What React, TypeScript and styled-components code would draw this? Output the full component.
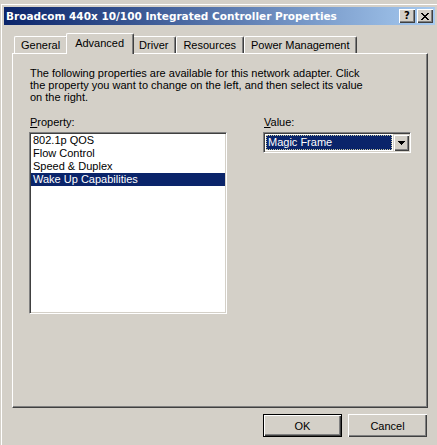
import React from "react";
import styled, { createGlobalStyle } from "styled-components";

const GlobalStyle = createGlobalStyle`
  html, body { margin: 0; padding: 0; background: #d4d0c8; overflow: hidden; }
  * { box-sizing: border-box; }
  #root { width: 437px; height: 445px; }
`;

const face = "#d4d0c8";
const shadow = "#808080";
const dark = "#404040";
const uiFont = `"Liberation Sans", Arial, sans-serif`;

const Page = styled.div`
  width: 437px;
  height: 445px;
  padding-top: 3px;
  background: ${face};
  font-family: ${uiFont};
  font-size: 11px;
  color: #000;
`;

const Window = styled.div`
  height: 442px;
  padding: 4px 2px 0 4px;
  background: ${face};
  box-shadow: inset 1px 1px 0 ${face}, inset 2px 2px 0 #fff;
`;

const TitleBar = styled.div`
  height: 18px;
  display: flex;
  align-items: center;
  padding: 0 2px 0 2px;
  background: linear-gradient(to right, #0a246a, #a6caf0);
`;

const TitleText = styled.div`
  flex: 1;
  color: #fff;
  font-family: "DejaVu Sans", Verdana, sans-serif;
  font-weight: bold;
  font-size: 10.5px;
  white-space: nowrap;
  line-height: 18px;
`;

const CaptionButton = styled.div`
  width: 16px;
  height: 14px;
  margin-left: 2px;
  background: ${face};
  box-shadow: inset 1px 1px 0 #fff, inset -1px -1px 0 ${dark}, inset -2px -2px 0 ${shadow};
  display: flex;
  align-items: center;
  justify-content: center;
  font-family: "DejaVu Sans", Verdana, sans-serif;
  font-weight: bold;
  font-size: 10px;
  line-height: 14px;
  color: #000;
`;

const Client = styled.div`
  padding-top: 8px;
`;

const TabStrip = styled.div`
  display: flex;
  align-items: flex-end;
  height: 21px;
  padding-left: 10px;
`;

const Tab = styled.div<{ $active?: boolean }>`
  position: relative;
  z-index: ${(p) => (p.$active ? 2 : 0)};
  height: ${(p) => (p.$active ? "21px" : "18px")};
  margin: ${(p) => (p.$active ? "0 -2px" : "0")};
  padding: ${(p) => (p.$active ? "0 9px 3px 8px" : "0 7px 1px 6px")};
  display: flex;
  align-items: center;
  background: ${face};
  border-top: 1px solid #fff;
  border-left: 1px solid #fff;
  border-right: 1px solid ${dark};
  border-radius: 2px 2px 0 0;
  box-shadow: inset -1px 0 0 ${shadow};
  white-space: nowrap;
`;

const Panel = styled.div`
  position: relative;
  z-index: 1;
  margin: -1px 0 0 8px;
  width: 416px;
  height: 355px;
  background: ${face};
  border-top: 1px solid #fff;
  border-left: 1px solid #fff;
  border-right: 1px solid ${dark};
  border-bottom: 1px solid ${dark};
  box-shadow: inset -1px -1px 0 ${shadow};
  padding: 13px 16px 0 16px;
`;

const Description = styled.p`
  margin: 0 0 0 1px;
  line-height: 12px;
`;

const Columns = styled.div`
  display: flex;
  gap: 36px;
  margin-top: 13px;
`;

const Column = styled.div<{ $width: number }>`
  display: flex;
  flex-direction: column;
  width: ${(p) => p.$width}px;
`;

const Label = styled.div`
  line-height: 13px;
  height: 13px;
  margin-bottom: 3px;
  padding-left: 1px;
`;

const ListBox = styled.div`
  height: 182px;
  background: #fff;
  border: 1px solid;
  border-color: ${shadow} #fff #fff ${shadow};
  box-shadow: inset 1px 1px 0 ${dark}, inset -1px -1px 0 ${face};
  padding: 1px;
`;

const ListItem = styled.div<{ $selected?: boolean }>`
  height: 13px;
  line-height: 13px;
  padding-left: 2px;
  white-space: nowrap;
  background: ${(p) => (p.$selected ? "#0a246a" : "transparent")};
  color: ${(p) => (p.$selected ? "#fff" : "#000")};
`;

const Combo = styled.div`
  width: 148px;
  height: 21px;
  display: flex;
  background: #fff;
  border: 1px solid;
  border-color: ${shadow} #fff #fff ${shadow};
  box-shadow: inset 1px 1px 0 ${dark}, inset -1px -1px 0 ${face};
  padding: 1px;
`;

const ComboValue = styled.div`
  flex: 1;
  margin: 1px;
  background: #0a246a;
  color: #fff;
  border: 1px dotted #c8c8a0;
  line-height: 13px;
  padding-left: 1px;
  white-space: nowrap;
`;

const ComboButton = styled.div`
  width: 16px;
  height: 17px;
  background: ${face};
  box-shadow: inset 1px 1px 0 ${face}, inset 2px 2px 0 #fff, inset -1px -1px 0 ${dark}, inset -2px -2px 0 ${shadow};
  display: flex;
  align-items: center;
  justify-content: center;
`;

const ButtonRow = styled.div`
  display: flex;
  justify-content: flex-end;
  gap: 6px;
  margin-top: 6px;
  padding-right: 8px;
`;

const PushButton = styled.div<{ $default?: boolean }>`
  width: 79px;
  height: 23px;
  display: flex;
  align-items: center;
  justify-content: center;
  background: ${face};
  border: ${(p) => (p.$default ? "1px solid #000" : "none")};
  box-shadow: inset 1px 1px 0 #fff, inset -1px -1px 0 ${dark}, inset -2px -2px 0 ${shadow};
`;

const CloseGlyph = () => (
  <svg width="8" height="7" viewBox="0 0 8 7" shapeRendering="crispEdges">
    {[
      [0, 0], [6, 0], [1, 1], [5, 1], [2, 2], [4, 2], [3, 3], [2, 4], [4, 4], [1, 5], [5, 5], [0, 6], [6, 6],
    ].map(([x, y], i) => (
      <rect key={i} x={x} y={y} width={2} height={1} fill="#000" />
    ))}
  </svg>
);

const ArrowGlyph = () => (
  <svg width="7" height="4" viewBox="0 0 7 4" shapeRendering="crispEdges">
    <rect x="0" y="0" width="7" height="1" fill="#000" />
    <rect x="1" y="1" width="5" height="1" fill="#000" />
    <rect x="2" y="2" width="3" height="1" fill="#000" />
    <rect x="3" y="3" width="1" height="1" fill="#000" />
  </svg>
);

const tabs = ["General", "Advanced", "Driver", "Resources", "Power Management"];
const properties = ["802.1p QOS", "Flow Control", "Speed & Duplex", "Wake Up Capabilities"];

export default function App() {
  return (
    <>
      <GlobalStyle />
      <Page>
        <Window>
          <TitleBar>
            <TitleText>Broadcom 440x 10/100 Integrated Controller Properties</TitleText>
            <CaptionButton>?</CaptionButton>
            <CaptionButton>
              <CloseGlyph />
            </CaptionButton>
          </TitleBar>
          <Client>
            <TabStrip>
              {tabs.map((t) => (
                <Tab key={t} $active={t === "Advanced"}>
                  {t}
                </Tab>
              ))}
            </TabStrip>
            <Panel>
              <Description>
                The following properties are available for this network adapter. Click
                <br />
                the property you want to change on the left, and then select its value
                <br />
                on the right.
              </Description>
              <Columns>
                <Column $width={199}>
                  <Label>
                    <u>P</u>roperty:
                  </Label>
                  <ListBox>
                    {properties.map((p, i) => (
                      <ListItem key={p} $selected={i === 3}>
                        {p}
                      </ListItem>
                    ))}
                  </ListBox>
                </Column>
                <Column $width={148}>
                  <Label>
                    <u>V</u>alue:
                  </Label>
                  <Combo>
                    <ComboValue>Magic Frame</ComboValue>
                    <ComboButton>
                      <ArrowGlyph />
                    </ComboButton>
                  </Combo>
                </Column>
              </Columns>
            </Panel>
            <ButtonRow>
              <PushButton $default>OK</PushButton>
              <PushButton>Cancel</PushButton>
            </ButtonRow>
          </Client>
        </Window>
      </Page>
    </>
  );
}
